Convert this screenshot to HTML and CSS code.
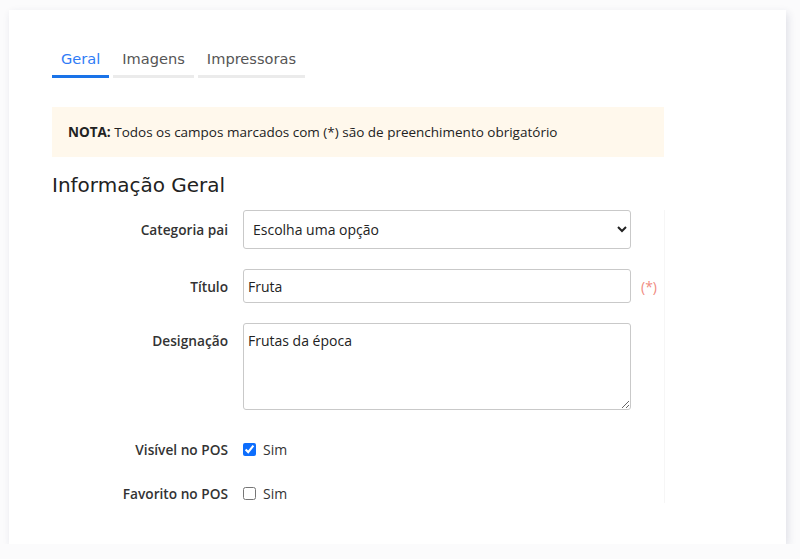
FILE: index.html
```html
<!DOCTYPE html>
<html lang="pt">
<head>
  <meta charset="UTF-8">
  <meta name="viewport" content="width=device-width, initial-scale=1.0">
  <title>Categoria</title>
  <link rel="stylesheet" href="styles.css">
</head>
<body>
  <div class="card">
    <div class="tabs">
      <div class="tab active">Geral</div>
      <div class="tab">Imagens</div>
      <div class="tab">Impressoras</div>
    </div>

    <div class="note"><b>NOTA:</b> Todos os campos marcados com (*) são de preenchimento obrigatório</div>

    <h2 class="section-title">Informação Geral</h2>

    <div class="form">
      <div class="form-row">
        <label class="form-label">Categoria pai</label>
        <select class="form-control form-select">
          <option>Escolha uma opção</option>
        </select>
      </div>
      <div class="form-row">
        <label class="form-label">Título</label>
        <input class="form-control form-input" type="text" value="Fruta">
        <span class="required">(*)</span>
      </div>
      <div class="form-row top">
        <label class="form-label">Designação</label>
        <textarea class="form-control form-textarea">Frutas da época</textarea>
      </div>
      <div class="form-row check-row">
        <label class="form-label">Visível no POS</label>
        <label class="check"><input type="checkbox" checked> Sim</label>
      </div>
      <div class="form-row check-row">
        <label class="form-label">Favorito no POS</label>
        <label class="check"><input type="checkbox"> Sim</label>
      </div>
    </div>
  </div>
</body>
</html>
```

FILE: styles.css
```css
body {
  margin: 0;
  background-color: #fbfbfc;
  font-family: "Open Sans", sans-serif;
  color: #212529;
}
.card {
  margin: 10px 14px 0 9px;
  height: 534px;
  box-sizing: border-box;
  background-color: #fff;
  box-shadow: 2px 3px 8px rgba(40, 50, 90, 0.13);
  padding: 39px 42px 0 43px;
}
.tabs {
  display: flex;
  gap: 4px;
}
.tab {
  font-family: "DejaVu Sans", sans-serif;
  font-size: 14.6px;
  color: #555;
  padding: 0 9px 6px;
  border-bottom: 3px solid #ebebeb;
  line-height: 20px;
}
.tab.active {
  color: #2f7cf6;
  border-bottom-color: #1a73e8;
}
.note {
  margin-top: 29px;
  width: 612px;
  box-sizing: border-box;
  background-color: #fff8ec;
  padding: 15px 16px;
  font-size: 13.5px;
  line-height: 20px;
  color: #222;
}
.note b {
  font-weight: 700;
}
.section-title {
  font-family: "DejaVu Sans", sans-serif;
  font-weight: 400;
  font-size: 20px;
  color: #222;
  margin: 16px 0 13px;
}
.form {
  width: 612px;
  border-right: 1px solid #f6f6f6;
}
.form-row {
  display: grid;
  grid-template-columns: 176px 388px auto;
  column-gap: 15px;
  align-items: center;
  margin-bottom: 20px;
}
.form-row.top {
  align-items: start;
}
.form-label {
  text-align: right;
  font-size: 13.7px;
  font-weight: 600;
  color: #333;
}
.form-row.top .form-label {
  padding-top: 8px;
}
.form-control {
  font-family: "Open Sans", sans-serif;
  font-size: 14px;
  color: #222;
  border: 1px solid #c9c9c9;
  border-radius: 3px;
  background-color: #fff;
  box-sizing: border-box;
  width: 388px;
}
.form-select {
  height: 39px;
  padding: 0 5px;
}
.form-input {
  height: 34px;
  padding: 0 4px;
}
.form-textarea {
  height: 87px;
  padding: 7px 4px;
  resize: vertical;
  line-height: 19px;
}
.required {
  color: #f08a80;
  font-size: 14px;
  margin-left: -5px;
}
.check-row {
  margin-top: 30px;
  margin-bottom: 25px;
}
.check-row + .check-row {
  margin-top: 0;
  margin-bottom: 0;
}
.check {
  font-size: 14px;
  color: #333;
  display: flex;
  align-items: center;
  gap: 7px;
}
.check input {
  margin: 0;
  width: 13px;
  height: 13px;
  accent-color: #0d6efd;
}
```
